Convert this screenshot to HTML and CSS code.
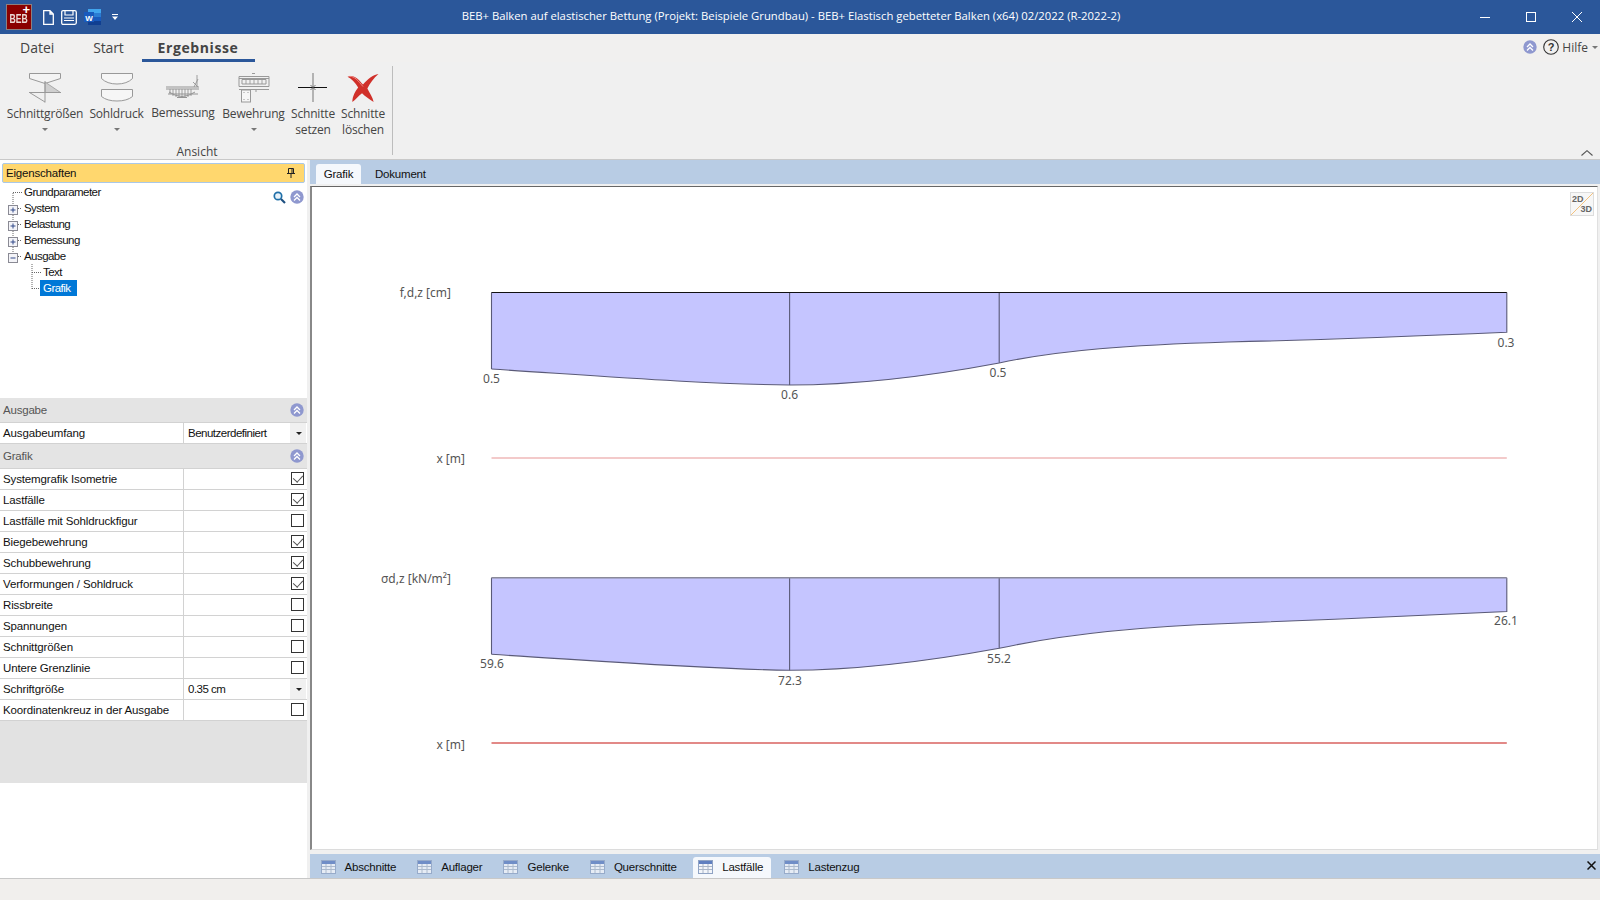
FILE: index.html
```html
<!DOCTYPE html>
<html lang="de">
<head>
<meta charset="utf-8">
<title>BEB+</title>
<link rel="stylesheet" href="styles.css">
</head>
<body>
<div class="app">
  <header class="titlebar">
    <div class="qat">
      <div class="logo"><span class="logo-text">BEB</span><span class="logo-plus">+</span></div>
      <svg class="qi qi-new" width="11" height="15" viewBox="0 0 11 15"><path d="M.7.7h6.3l3.3 3.3v10.3H.7z M7 .7v3.3h3.3" fill="none" stroke="#fff" stroke-width="1.3"/></svg>
      <svg class="qi qi-save" width="16" height="15" viewBox="0 0 16 15"><path d="M.7 2.2Q.7.7 2.2.7h11.6Q15.3.7 15.3 2.2v10.6q0 1.500-1.500 1.500H2.200Q.7 14.300.7 12.800z" fill="none" stroke="#fff" stroke-width="1.300"/><path d="M4 .7v4.300h8V.7M3 8h10M3 10.500h10" fill="none" stroke="#fff" stroke-width="1.200"/></svg>
      <svg class="qi qi-word" width="17" height="16" viewBox="0 0 17 16"><rect x="4" y="0" width="13" height="4" fill="#41a5ee"/><rect x="4" y="4" width="13" height="4" fill="#2b7cd3"/><rect x="4" y="8" width="13" height="4" fill="#185abd"/><rect x="4" y="12" width="13" height="4" fill="#103f91"/><rect x="0" y="3" width="10" height="10" fill="#185abd"/><text x="5" y="11.500" class="word-w">W</text></svg>
      <svg class="qi qi-drop" width="6" height="6" viewBox="0 0 6 6"><path d="M0 0h6v1H0zM0 2.500h6L3 6z" fill="#fff"/></svg>
    </div>
    <div class="title">BEB+ Balken auf elastischer Bettung (Projekt: Beispiele Grundbau) - BEB+ Elastisch gebetteter Balken (x64) 02/2022 (R-2022-2)</div>
    <div class="winctl">
      <svg width="10" height="10" viewBox="0 0 10 10"><path d="M0 5.500h10" stroke="#fff"/></svg>
      <svg width="10" height="10" viewBox="0 0 10 10"><rect x=".5" y=".5" width="9" height="9" fill="none" stroke="#fff"/></svg>
      <svg width="10" height="10" viewBox="0 0 10 10"><path d="M0 0l10 10M10 0L0 10" stroke="#fff"/></svg>
    </div>
  </header>

  <nav class="menutabs">
    <span class="mtab mtab-datei">Datei</span>
    <span class="mtab mtab-start">Start</span>
    <span class="mtab mtab-active">Ergebnisse</span>
    <div class="help">
      <svg class="chev" width="14" height="14" viewBox="0 0 14 14"><circle cx="7" cy="7" r="6.700" fill="#8f98cf"/><path d="M4 7l3-3 3 3M4 10.500l3-3 3 3" fill="none" stroke="#fff" stroke-width="1.300"/></svg>
      <svg class="helpq" width="16" height="16" viewBox="0 0 16 16"><circle cx="8" cy="8" r="7.300" fill="none" stroke="#333" stroke-width="1.100"/><text x="8" y="12" class="q-mark">?</text></svg>
      <span class="help-text">Hilfe</span>
      <i class="caret caret-help"></i>
    </div>
  </nav>

  <section class="ribbon">
    <div class="rgroup">
      <div class="rbuttons">
        <div class="rbtn w1">
          <svg width="32" height="30" viewBox="0 0 32 30"><path d="M.5.500h31v5L16 10.500 .5 5.500z" fill="#f4f4f4" stroke="#999"/><path d="M16 9l15.500 10.500H16z" fill="#cfcfcf" stroke="#999" stroke-width=".8"/><path d="M16 8v21.500M0 19.500h32M.5 19.500L16 29" fill="none" stroke="#999"/></svg>
          <span>Schnittgrößen</span><i class="caret"></i>
        </div>
        <div class="rbtn w2">
          <svg width="32" height="30" viewBox="0 0 32 30"><path d="M.5.500h31v5Q26 11 16 11T.5 5.500z" fill="#f6f6f6" stroke="#999"/><path d="M.5 16.500h31v7Q26 28 16 28T.5 23.500z" fill="#f6f6f6" stroke="#999"/></svg>
          <span>Sohldruck</span><i class="caret"></i>
        </div>
        <div class="rbtn w3">
          <svg width="34" height="30" viewBox="0 0 34 30"><path d="M0 14h33M0 16h33M2 21h30M3 19q13 9 26 0" fill="none" stroke="#949494"/><path d="M4 16v5M7 16v7M10 16v8M13 16v9M16 16v9M19 16v9M22 16v8M25 16v7M28 14L32 6M27 9l5 5M31 2v12" fill="none" stroke="#949494" stroke-width=".9"/><path d="M11 24.500h10" stroke="#949494"/></svg>
          <span>Bemessung</span>
        </div>
        <div class="rbtn w4">
          <svg width="32" height="30" viewBox="0 0 32 30"><path d="M14 .500h3M1 3.500h30v10H1zM1 5.500h30M4 6.500h24v4.500H4zM1 16.500h30" fill="none" stroke="#999"/><path d="M8 6.500v4.500M12 6.500v4.500M16 6.500v4.500M20 6.500v4.500M24 6.500v4.500" stroke="#999" stroke-width=".9"/><rect x="3.500" y="17" width="9" height="12" fill="#f6f6f6" stroke="#999"/><path d="M5.500 19.500h1M9.500 19.500h1M5.500 26.500h1M9.500 26.500h1M17 18h2" stroke="#999"/></svg>
          <span>Bewehrung</span><i class="caret"></i>
        </div>
        <div class="rbtn w5">
          <svg width="30" height="30" viewBox="0 0 30 30"><path d="M15 0v29" stroke="#777"/><path d="M0 14.500h29" stroke="#111"/><path d="M12.500 12l5 5M17.500 12l-5 5" stroke="#555" stroke-width=".8"/></svg>
          <span>Schnitte<br>setzen</span>
        </div>
        <div class="rbtn w6">
          <svg class="redx" width="34" height="30" viewBox="0 0 34 31"><path d="M1 4C7 1 12 6 17 12C22 6 27 2 33 1C28 5 24 11 21.500 16C24 21 27 25 28 30C23 27 19 24 16 21C12 24 9 28 6 30C6 24 9 19 12 15C9 10 5 6 1 4Z" fill="#d0302a"/><path d="M3 3.500C8 3 12 8 17 14" stroke="#ee8a85" stroke-width="1" fill="none"/></svg>
          <span>Schnitte<br>löschen</span>
        </div>
      </div>
      <div class="rgroup-label">Ansicht</div>
    </div>
    <svg class="ribbon-collapse" width="12" height="6" viewBox="0 0 12 6"><path d="M.5 5.500L6 .7l5.500 4.800" fill="none" stroke="#555" stroke-width="1.100"/></svg>
  </section>

  <main class="workspace">
    <aside class="leftpane">
      <div class="pane-head"><span>Eigenschaften</span>
        <svg width="8" height="10" viewBox="0 0 8 10"><path d="M1.500.5h5v5h-5zM0 5.500h8M4 5.500V10M5 .5v5" fill="none" stroke="#222"/></svg>
      </div>
      <div class="tree">
        <svg class="tree-lines" width="60" height="112" viewBox="0 185 60 112">
          <path d="M13 193V252M13 192.500H22M18 208.500H22M18 224.500H22M18 240.500H22M18 256.500H22M32 264V290M32 272.500H41M32 288.500H39" fill="none" stroke="#666" stroke-dasharray="1 1"/>
          <g fill="#f4f4f8" stroke="#8a8a94">
            <rect x="8.500" y="205.500" width="9" height="9"/><rect x="8.500" y="221.500" width="9" height="9"/><rect x="8.500" y="237.500" width="9" height="9"/><rect x="8.500" y="253.500" width="9" height="9"/>
          </g>
          <path d="M10.500 210h5M13 207.500v5M10.500 226h5M13 223.500v5M10.500 242h5M13 239.500v5M10.500 258h5" stroke="#334a8a"/>
        </svg>
        <div class="tree-row">Grundparameter</div>
        <div class="tree-row">System</div>
        <div class="tree-row">Belastung</div>
        <div class="tree-row">Bemessung</div>
        <div class="tree-row">Ausgabe</div>
        <div class="tree-row sub">Text</div>
        <div class="tree-row sub"><span class="selected">Grafik</span></div>
        <div class="tree-tools">
          <svg width="13" height="13" viewBox="0 0 13 13"><circle cx="5" cy="5" r="3.700" fill="#e8f2fa" stroke="#1f6fa8" stroke-width="1.700"/><path d="M8 8l4 4" stroke="#1d4f80" stroke-width="2.200"/></svg>
          <svg width="14" height="14" viewBox="0 0 14 14"><circle cx="7" cy="7" r="6.700" fill="#8f98cf"/><path d="M4 7l3-3 3 3M4 10.500l3-3 3 3" fill="none" stroke="#fff" stroke-width="1.300"/></svg>
        </div>
      </div>
      <div class="props">
        <div class="p-head">Ausgabe<svg width="14" height="14" viewBox="0 0 14 14"><circle cx="7" cy="7" r="6.700" fill="#8f98cf"/><path d="M4 7l3-3 3 3M4 10.500l3-3 3 3" fill="none" stroke="#fff" stroke-width="1.300"/></svg></div>
        <div class="p-row"><span class="p-name">Ausgabeumfang</span><span class="p-val">Benutzerdefiniert<b class="drop"></b></span></div>
        <div class="p-head">Grafik<svg width="14" height="14" viewBox="0 0 14 14"><circle cx="7" cy="7" r="6.700" fill="#8f98cf"/><path d="M4 7l3-3 3 3M4 10.500l3-3 3 3" fill="none" stroke="#fff" stroke-width="1.300"/></svg></div>
        <div class="p-row"><span class="p-name">Systemgrafik Isometrie</span><span class="p-val"><i class="cb on"></i></span></div>
        <div class="p-row"><span class="p-name">Lastfälle</span><span class="p-val"><i class="cb on"></i></span></div>
        <div class="p-row"><span class="p-name">Lastfälle mit Sohldruckfigur</span><span class="p-val"><i class="cb"></i></span></div>
        <div class="p-row"><span class="p-name">Biegebewehrung</span><span class="p-val"><i class="cb on"></i></span></div>
        <div class="p-row"><span class="p-name">Schubbewehrung</span><span class="p-val"><i class="cb on"></i></span></div>
        <div class="p-row"><span class="p-name">Verformungen / Sohldruck</span><span class="p-val"><i class="cb on"></i></span></div>
        <div class="p-row"><span class="p-name">Rissbreite</span><span class="p-val"><i class="cb"></i></span></div>
        <div class="p-row"><span class="p-name">Spannungen</span><span class="p-val"><i class="cb"></i></span></div>
        <div class="p-row"><span class="p-name">Schnittgrößen</span><span class="p-val"><i class="cb"></i></span></div>
        <div class="p-row"><span class="p-name">Untere Grenzlinie</span><span class="p-val"><i class="cb"></i></span></div>
        <div class="p-row"><span class="p-name">Schriftgröße</span><span class="p-val">0.35 cm<b class="drop"></b></span></div>
        <div class="p-row"><span class="p-name">Koordinatenkreuz in der Ausgabe</span><span class="p-val"><i class="cb"></i></span></div>
        <div class="p-help"></div>
      </div>
    </aside>

    <div class="rightpane">
      <div class="doc-tabs">
        <span class="dtab active">Grafik</span>
        <span class="dtab">Dokument</span>
      </div>
      <div class="canvas">
        <svg class="chart" width="1286" height="664" viewBox="312 187 1286 664">
          <g class="beam">
            <path class="fill" d="M491.500 292.500H1506.800V332.300C1420 336 1320 340 1228 342C1130 345 1060 350 999.200 363C930 376 860 385 789.600 385C700 384 600 376 491.500 369Z"/>
            <path class="edge" d="M491.500 369C600 376 700 384 789.600 385C860 385 930 376 999.200 363C1060 350 1130 345 1228 342C1320 340 1420 336 1506.800 332.300V292.500"/>
            <path class="edge" d="M491.500 292.500V369M789.600 292.500V385M999.200 292.500V363"/>
            <path class="top" d="M491.500 292.500H1506.800"/>
          </g>
          <text class="lbl" x="451" y="297" text-anchor="end">f,d,z [cm]</text>
          <text class="lbl" x="491.500" y="382.500" text-anchor="middle">0.5</text>
          <text class="lbl" x="789.600" y="398.500" text-anchor="middle">0.6</text>
          <text class="lbl" x="998" y="376.500" text-anchor="middle">0.5</text>
          <text class="lbl" x="1506" y="346.500" text-anchor="middle">0.3</text>
          <text class="lbl" x="465" y="463" text-anchor="end">x [m]</text>
          <path class="axis pale" d="M491.500 458H1506.800"/>

          <g class="beam">
            <path class="fill" d="M491.500 577.800H1506.800V611.500C1420 615.500 1320 620 1228 623.500C1130 627 1060 635 999.200 648.300C930 661 860 670.300 789.600 670.300C700 669 600 661 491.500 654.300Z"/>
            <path class="edge" d="M491.500 654.300C600 661 700 669 789.600 670.300C860 670.300 930 661 999.200 648.300C1060 635 1130 627 1228 623.500C1320 620 1420 615.500 1506.800 611.500V577.800"/>
            <path class="edge" d="M491.500 577.800V654.300M789.600 577.800V670.300M999.200 577.800V648.300"/>
            <path class="top grey" d="M491.500 577.800H1506.800"/>
          </g>
          <text class="lbl" x="451" y="583" text-anchor="end">σd,z [kN/m²]</text>
          <text class="lbl" x="492" y="667.500" text-anchor="middle">59.6</text>
          <text class="lbl" x="790" y="684.500" text-anchor="middle">72.3</text>
          <text class="lbl" x="999" y="662.500" text-anchor="middle">55.2</text>
          <text class="lbl" x="1506" y="624.500" text-anchor="middle">26.1</text>
          <text class="lbl" x="465" y="749" text-anchor="end">x [m]</text>
          <path class="axis" d="M491.500 743H1506.800"/>
        </svg>
        <div class="view-toggle">
          <span class="vt-2">2D</span><span class="vt-3">3D</span>
        </div>
      </div>
      <div class="bottom-tabs">
        <span class="btab"><svg class="grid-ic" width="15" height="14" viewBox="0 0 15 14"><use href="#gridicon"/></svg>Abschnitte</span>
        <span class="btab"><svg class="grid-ic" width="15" height="14" viewBox="0 0 15 14"><use href="#gridicon"/></svg>Auflager</span>
        <span class="btab"><svg class="grid-ic" width="15" height="14" viewBox="0 0 15 14"><use href="#gridicon"/></svg>Gelenke</span>
        <span class="btab"><svg class="grid-ic" width="15" height="14" viewBox="0 0 15 14"><use href="#gridicon"/></svg>Querschnitte</span>
        <span class="btab active"><svg class="grid-ic" width="15" height="14" viewBox="0 0 15 14"><use href="#gridicon"/></svg>Lastfälle</span>
        <span class="btab"><svg class="grid-ic" width="15" height="14" viewBox="0 0 15 14"><use href="#gridicon"/></svg>Lastenzug</span>
        <svg class="btabs-close" width="9" height="9" viewBox="0 0 9 9"><path d="M.5.500l8 8M8.500.500l-8 8" stroke="#111" stroke-width="1.500"/></svg>
      </div>
    </div>
  </main>
  <footer class="statusbar"></footer>
</div>
<svg class="defs" width="0" height="0">
  <defs>
    <g id="gridicon">
      <rect x=".5" y=".5" width="14" height="13" fill="#f2f5fa" stroke="#8fa3c4"/>
      <rect x="1" y="1" width="13" height="3" fill="#5f7fc0"/>
      <path d="M1 6.500h13M1 9.500h13M5 4v9M10 4v9" stroke="#aab6c8"/>
    </g>
  </defs>
</svg>
</body>
</html>
```
FILE: styles.css
```css
* { box-sizing: border-box; }
html, body { margin: 0; height: 100%; }
body { font-family: "Liberation Sans", Arial, sans-serif; font-size: 11.5px; letter-spacing: -.2px; color: #111; background: #f0f0f0; overflow: hidden; }
svg { display: block; flex: none; }
.defs { position: absolute; }
.app { width: 1600px; height: 900px; display: flex; flex-direction: column; }

/* title bar */
.titlebar { height: 34px; background: #2b579a; display: flex; align-items: center; padding-left: 6px; color: #fff; position: relative; flex: none; }
.qat { display: flex; align-items: center; }
.logo { width: 26px; height: 26px; background: #8a0000; border: 1px solid #8d7f7f; position: relative; display: flex; align-items: center; justify-content: center; }
.logo-text { font-size: 12px; line-height: 10px; font-weight: 700; letter-spacing: 0; color: #ecd9d4; transform: scaleX(.72); margin-top: 3px; }
.logo-plus { position: absolute; right: 1px; top: 1px; font-size: 13px; line-height: 7px; font-weight: 700; letter-spacing: 0; color: #fff; }
.qi-new { margin-left: 11px; }
.qi-save { margin-left: 7px; }
.qi-word { margin-left: 7px; }
.qi-drop { margin-left: 11px; }
.word-w { font: 700 8px "Liberation Sans", sans-serif; fill: #fff; text-anchor: middle; }
.title { position: absolute; left: 0; right: 18px; top: 0; line-height: 32px; text-align: center; font-family: "Open Sans", sans-serif; font-size: 11.3px; letter-spacing: 0; color: #fff; pointer-events: none; }
.winctl { margin-left: auto; display: flex; gap: 36px; padding-right: 18px; }

/* menu tabs */
.menutabs { height: 28px; background: #f1f0ef; display: flex; position: relative; flex: none; font-family: "Open Sans", sans-serif; font-size: 14px; letter-spacing: 0; color: #444; }
.mtab { line-height: 27px; }
.mtab-datei { margin-left: 20px; }
.mtab-start { margin-left: 39px; letter-spacing: -.2px; }
.mtab-active { margin-left: 18px; width: 113px; text-align: center; font-weight: 700; letter-spacing: .6px; border-bottom: 3px solid #2b579a; height: 28px; color: #444; }
.help { margin-left: auto; display: flex; align-items: center; height: 22px; padding-right: 2px; margin-top: 2px; }
.help .helpq { margin-left: 6px; }
.help-text { margin-left: 3px; font-size: 12px; color: #444; }
.q-mark { font: 700 11px "Liberation Sans", sans-serif; fill: #333; text-anchor: middle; }
.caret { display: block; width: 0; height: 0; border: 3px solid transparent; border-top: 3px solid #777; border-bottom: 0; }
.caret-help { margin-left: 4px; }

/* ribbon */
.ribbon { height: 98px; background: #f0f0f0; display: flex; position: relative; border-bottom: 1px solid #c9c9c9; flex: none; font-family: "Open Sans", sans-serif; letter-spacing: 0; color: #444; }
.rgroup { width: 393px; margin: 4px 0; border-right: 1px solid #bdbdbd; display: flex; flex-direction: column; }
.rbuttons { display: flex; padding-left: 7px; gap: 6px; flex: 1; padding-top: 7px; }
.rbtn { display: flex; flex-direction: column; align-items: center; font-size: 12px; letter-spacing: -.18px; line-height: 16px; text-align: center; }
.rbtn span { margin-top: 3px; white-space: nowrap; }
.rbtn.w3 span { margin-top: 2px; }
.rbtn .caret { margin-top: 6px; }
.w1 { width: 76px; } .w2 { width: 55px; } .w3 { width: 66px; } .w4 { width: 63px; } .w5 { width: 44px; } .w6 { width: 44px; }
.redx { filter: blur(.5px); }
.rgroup-label { text-align: center; font-size: 12px; line-height: 16px; margin-bottom: -5px; padding-left: 2px; }
.ribbon-collapse { position: absolute; right: 7px; bottom: 3px; }

/* workspace */
.workspace { flex: 1; display: flex; min-height: 0; }
.leftpane { width: 307px; background: #fff; display: flex; flex-direction: column; }
.pane-head { margin: 3px 2px 0; height: 20px; background: #ffd76e; border: 1px solid #a9c8e8; border-radius: 2px; display: flex; align-items: center; justify-content: space-between; padding: 0 9px 0 3px; color: #111; }
.tree { position: relative; height: 215px; padding-top: 1px; }
.tree-lines { position: absolute; left: 0; top: 2px; }
.tree-row { height: 16px; line-height: 16px; padding-left: 24px; position: relative; letter-spacing: -.55px; }
.tree-row.sub { padding-left: 43px; }
.tree-row.sub .selected { margin-left: -3px; display: inline-block; background: #0078d7; color: #fff; width: 37px; padding-left: 3px; }
.tree-tools { position: absolute; left: 273px; top: 7px; display: flex; gap: 4px; align-items: center; }

.props { flex: 1; display: flex; flex-direction: column; }
.p-head { height: 25px; background: #e4e4e4; color: #555; display: flex; align-items: center; justify-content: space-between; padding: 0 3px; border-bottom: 1px solid #d2d2d2; flex: none; }
.p-row { height: 21px; display: flex; border-bottom: 1px solid #d2d2d2; flex: none; }
.p-name { width: 184px; padding-left: 3px; line-height: 20px; border-right: 1px solid #d2d2d2; white-space: nowrap; flex: none; letter-spacing: -.13px; }
.p-val { flex: 1; display: flex; align-items: center; justify-content: flex-end; position: relative; padding: 0 3px 0 4px; letter-spacing: -.5px; }
.p-val .drop { position: absolute; right: 1px; top: 0; width: 16px; height: 20px; background: #f0f0f0; }
.p-val .drop::after { content: ""; position: absolute; left: 6px; top: 9px; border: 3px solid transparent; border-top: 3px solid #222; border-bottom: 0; }
.p-val:not(:has(.cb)) { justify-content: flex-start; }
.cb { display: block; width: 13px; height: 13px; margin-top: -1px; border: 1px solid #333; background: #fff; position: relative; }
.cb.on::after { content: ""; position: absolute; left: 3px; top: 0; width: 5px; height: 8px; border: solid #555; border-width: 0 1px 1px 0; transform: rotate(42deg); }
.p-help { height: 62px; background: #e2e2e2; flex: none; }

.rightpane { flex: 1; display: flex; flex-direction: column; min-width: 0; padding-left: 3px; }
.doc-tabs { height: 24px; background: #b8cce4; display: flex; align-items: flex-end; padding-left: 6px; flex: none; }
.dtab { height: 20px; line-height: 20px; padding: 0 8px; color: #111; margin-right: 6px; }
.dtab.active { background: #f5f8fc; border-radius: 3px 3px 0 0; width: 45px; text-align: center; padding: 0; }
.canvas { margin-top: 2px; flex: none; height: 664px; margin-right: 2px; background: #fff; border-top: 1px solid #666; border-left: 2px solid #888; border-right: 1px solid #e0e0e0; border-bottom: 1px solid #dcdcdc; position: relative; }
.chart { position: absolute; left: 0; top: 0; }
.fill { fill: #c5c5ff; stroke: none; }
.edge { fill: none; stroke: #5a5a78; stroke-width: 1.100; }
.top { fill: none; stroke: #111; stroke-width: 1.200; }
.top.grey { stroke: #8a8a99; stroke-width: 1.500; }
.axis { stroke: #d9625f; stroke-width: 1.300; fill: none; }
.axis.pale { stroke: #efb9b9; stroke-width: 1.600; }
.lbl { font: 12px "Noto Sans", sans-serif; letter-spacing: 0; fill: #555; }
.view-toggle { position: absolute; right: 3px; top: 5px; width: 24px; height: 24px; background: #f7f7f7 linear-gradient(to top left, transparent 48.500%, #f3c27e 49%, #f3c27e 51%, transparent 51.500%); border: 1px solid #ddd; font: 700 9px "Liberation Sans", sans-serif; letter-spacing: 0; color: #666; }
.vt-2 { position: absolute; left: 1px; top: 1px; }
.vt-3 { position: absolute; right: 1px; bottom: 1px; }

.bottom-tabs { margin-top: 4px; height: 24px; background: #b8cce4; display: flex; align-items: flex-end; position: relative; flex: none; }
.btab { height: 21px; display: flex; align-items: center; padding: 0 10.5px 2px; gap: 9px; color: #111; }
.btab .grid-ic { opacity: .8; }
.btab.active { background: #f5f8fc; border-radius: 3px 3px 0 0; margin-left: 6px; padding: 0 8px 2px 5px; margin-right: 2.5px; }
.btab.active .grid-ic { opacity: 1; }
.btabs-close { position: absolute; right: 4px; top: 7px; }
.statusbar { height: 22px; background: #f1efed; border-top: 1px solid #c8c8c8; flex: none; }
```
